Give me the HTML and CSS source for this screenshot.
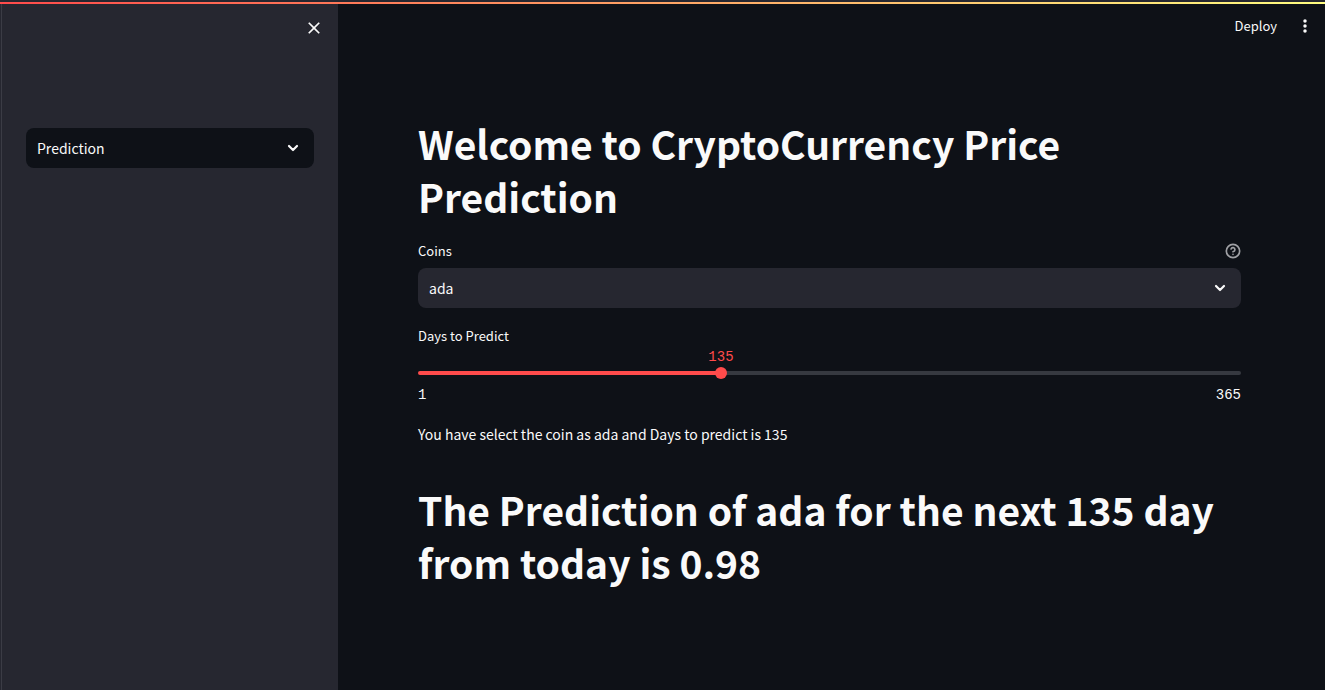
FILE: index.html
```html
<!DOCTYPE html>
<html lang="en">
<head>
<meta charset="utf-8">
<meta name="viewport" content="width=device-width, initial-scale=1">
<title>CryptoCurrency Price Prediction</title>
<link rel="stylesheet" href="styles.css">
</head>
<body>
<div class="decoration"></div>
<div class="app">
  <aside class="sidebar">
    <div class="sidebar-header">
      <button class="icon-button" type="button" aria-label="Close sidebar">
        <svg width="20" height="20" viewBox="0 0 24 24" fill="currentColor"><path d="M19 6.41 17.59 5 12 10.59 6.41 5 5 6.41 10.59 12 5 17.59 6.41 19 12 13.41 17.59 19 19 17.59 13.41 12z"/></svg>
      </button>
    </div>
    <div class="select select-dark">
      <select aria-label="Page"><option>Prediction</option></select>
      <svg class="chevron" width="24" height="24" viewBox="0 0 24 24"><path d="m8 10 4 4 4-4"/></svg>
    </div>
  </aside>
  <div class="content">
    <header class="toolbar">
      <button class="deploy" type="button">Deploy</button>
      <button class="icon-button" type="button" aria-label="Menu">
        <svg width="20" height="20" viewBox="0 0 24 24" fill="currentColor"><circle cx="12" cy="6" r="2.1"/><circle cx="12" cy="12" r="2.1"/><circle cx="12" cy="18" r="2.1"/></svg>
      </button>
    </header>
    <main class="main">
      <h1>Welcome to CryptoCurrency Price Prediction</h1>
      <div class="field">
        <div class="label-row">
          <label for="coins">Coins</label>
          <button class="help" type="button" aria-label="Help">
            <svg width="16" height="16" viewBox="0 0 24 24" fill="none" stroke="currentColor" stroke-width="2.5" stroke-linecap="round" stroke-linejoin="round"><circle cx="12" cy="12" r="10"/><path d="M9.090 9a3 3 0 0 1 5.830 1c0 2-3 3-3 3M12 17h.01"/></svg>
          </button>
        </div>
        <div class="select">
          <select id="coins"><option>ada</option></select>
          <svg class="chevron" width="24" height="24" viewBox="0 0 24 24"><path d="m8 10 4 4 4-4"/></svg>
        </div>
      </div>
      <div class="field slider" style="--value: 36.813%">
        <label for="days">Days to Predict</label>
        <div class="slider-control">
          <output class="slider-value" for="days">135</output>
          <div class="slider-track"></div>
          <input id="days" type="range" min="1" max="365" value="135">
        </div>
        <div class="slider-limits"><span>1</span><span>365</span></div>
      </div>
      <p>You have select the coin as ada and Days to predict is 135</p>
      <h1 class="result">The Prediction of ada for the next 135 day from today is 0.98</h1>
    </main>
  </div>
</div>
</body>
</html>
```

FILE: styles.css
```css
* {
  box-sizing: border-box;
}

body {
  margin: 0;
  display: flex;
  flex-direction: column;
  min-height: 100vh;
  background: #0e1117;
  color: #fafafa;
  font: 14px/24px "Noto Sans CJK SC", "Noto Sans", sans-serif;
}

button,
select {
  border: 0;
  padding: 0;
  background: none;
  color: inherit;
  font: inherit;
}

svg {
  display: block;
}

.decoration {
  height: 4px;
  border-top: 2px solid #262730;
  background: linear-gradient(90deg, #ff4b4b, #fffd80);
}

.app {
  display: flex;
  flex: 1;
}

.sidebar {
  flex: 0 0 338px;
  padding: 14px 24px 24px 26px;
  background: #262730;
  box-shadow: inset 1px 0 #262730, inset 2px 0 #3b3c45;
}

.sidebar-header {
  display: flex;
  justify-content: flex-end;
  height: 110px;
  margin-right: -10px;
}

.icon-button {
  height: 20px;
}

.select {
  display: grid;
  align-items: center;
  border-radius: 8px;
  background: #262730;
}

.select > * {
  grid-area: 1 / 1;
}

.select select {
  appearance: none;
  width: 100%;
  height: 40px;
  padding: 0 44px 0 11px;
  border-radius: 8px;
}

.select-dark {
  background: #0e1117;
}

.chevron {
  justify-self: end;
  margin-right: 9px;
  pointer-events: none;
  fill: none;
  stroke: currentColor;
  stroke-width: 2.2;
  stroke-linecap: round;
  stroke-linejoin: round;
}

.content {
  flex: 1;
  min-width: 0;
}

.toolbar {
  display: flex;
  align-items: center;
  justify-content: flex-end;
  gap: 18px;
  height: 44px;
  padding-right: 10px;
}

.deploy {
  font-size: 13px;
}

.main {
  padding: 69px 84px 40px 80px;
}

h1 {
  margin: 0;
  font-size: 39px;
  font-weight: 700;
  line-height: 53px;
}

.field {
  margin-top: 16px;
  font-size: 13px;
}

.field .select {
  font-size: 14px;
}

.label-row {
  display: flex;
  align-items: center;
  justify-content: space-between;
  height: 24px;
  margin-bottom: 5px;
}

.help {
  color: #a0a1a5;
}

.slider label {
  display: block;
}

.slider-control {
  display: grid;
  align-items: center;
  position: relative;
  height: 12px;
  margin-top: 19px;
}

.slider-control > * {
  grid-area: 1 / 1;
}

.slider-track {
  height: 4px;
  border-radius: 4px;
  background: linear-gradient(90deg, #ff4b4b var(--value), #363940 var(--value));
}

.slider-value {
  position: absolute;
  bottom: 100%;
  left: var(--value);
  transform: translateX(-50%);
  color: #ff4b4b;
}

.slider-value,
.slider-limits {
  font: 14px/20px "Liberation Mono", monospace;
}

.slider input {
  appearance: none;
  width: calc(100% + 12px);
  height: 12px;
  margin: 0 -6px;
  background: none;
}

.slider input::-webkit-slider-thumb {
  appearance: none;
  width: 12px;
  height: 12px;
  border-radius: 50%;
  background: #ff4b4b;
}

.slider-limits {
  display: flex;
  justify-content: space-between;
  margin-top: 6px;
}

p {
  margin: 17px 0 0;
}

.result {
  margin-top: 37px;
}
```
